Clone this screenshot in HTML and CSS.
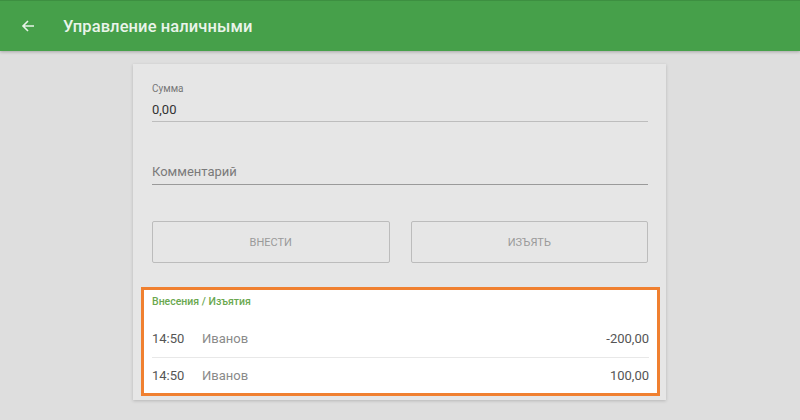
FILE: index.html
```html
<!DOCTYPE html>
<html lang="ru">
<head>
<meta charset="utf-8">
<link rel="stylesheet" href="styles.css">
</head>
<body>
<header class="appbar">
  <svg class="back" width="14" height="14" viewBox="0 0 14 14"><path d="M13 7H2M7 2L2 7l5 5" fill="none" stroke="#e8f3e8" stroke-width="1.6"/></svg>
  <h1 class="title">Управление наличными</h1>
</header>
<main class="page">
  <section class="card">
    <div class="field field-sum">
      <div class="label">Сумма</div>
      <div class="value">0,00</div>
    </div>
    <div class="field field-comment">
      <div class="placeholder">Комментарий</div>
    </div>
    <div class="buttons">
      <button class="btn">ВНЕСТИ</button>
      <button class="btn">ИЗЪЯТЬ</button>
    </div>
    <div class="history">
      <div class="history-title">Внесения / Изъятия</div>
      <div class="row">
        <span class="time">14:50</span><span class="name">Иванов</span><span class="amount">-200,00</span>
      </div>
      <div class="row last">
        <span class="time">14:50</span><span class="name">Иванов</span><span class="amount">100,00</span>
      </div>
    </div>
  </section>
</main>
</body>
</html>
```
FILE: styles.css
```css
html, body {
  margin: 0;
  padding: 0;
}
body {
  width: 800px;
  height: 420px;
  overflow: hidden;
  background: #dedede;
  font-family: Roboto, "Noto Sans", sans-serif;
}
.appbar {
  height: 51px;
  background: #46a04a;
  border-top: 1px solid #3d8f41;
  box-sizing: border-box;
  display: flex;
  align-items: center;
  padding-left: 21px;
  box-shadow: 0 1px 3px rgba(0,0,0,0.25);
  position: relative;
  z-index: 1;
}
.back {
  display: block;
}
.title {
  margin: 0 0 0 28px;
  font-size: 16.5px;
  font-weight: 500;
  color: #eaf4ea;
  letter-spacing: 0.1px;
}
.page {
  display: flex;
  justify-content: center;
  padding-top: 13px;
}
.card {
  width: 533px;
  margin-left: -1px;
  height: 336px;
  box-sizing: border-box;
  background: #e6e6e6;
  box-shadow: 0 1px 3px rgba(0,0,0,0.18);
  padding: 19px 0 4px;
}
.field {
  margin: 0 18px 0 19px;
}
.field-sum {
  border-bottom: 1px solid #bdbdbd;
  height: 38px;
}
.label {
  font-size: 10px;
  color: #777;
  line-height: 12px;
}
.value {
  font-size: 13px;
  color: #333;
  line-height: 16px;
  margin-top: 7px;
}
.field-comment {
  margin-top: 34px;
  height: 28px;
  border-bottom: 1px solid #9a9a9a;
  display: flex;
  align-items: flex-end;
}
.placeholder {
  font-size: 13px;
  color: #7a7a7a;
  line-height: 16px;
  padding-bottom: 4px;
}
.buttons {
  margin: 36px 18px 0 19px;
  display: grid;
  grid-template-columns: 1fr 1fr;
  gap: 21px;
}
.btn {
  height: 42px;
  background: #e6e6e6;
  border: 1px solid #bcbcbc;
  border-radius: 2px;
  font-family: Roboto, "Noto Sans", sans-serif;
  font-size: 11px;
  color: #9a9a9a;
  padding: 0;
}
.history {
  margin: 24px 6px 0 8px;
  border: 3px solid #f08030;
  background: #fff;
  padding: 0 8px 0 8px;
  height: 109px;
  box-sizing: border-box;
}
.history-title {
  font-size: 10.5px;
  font-weight: 500;
  color: #6aa84f;
  padding-top: 5px;
  line-height: 14px;
}
.row {
  display: flex;
  align-items: center;
  height: 37px;
  border-bottom: 1px solid #e8e8e8;
  font-size: 13px;
}
.history-title + .row {
  margin-top: 11px;
}
.row.last {
  border-bottom: none;
  height: 35px;
}
.time {
  width: 50px;
  color: #555;
}
.name {
  color: #8a8a8a;
  flex: 1;
}
.amount {
  color: #555;
}
```
